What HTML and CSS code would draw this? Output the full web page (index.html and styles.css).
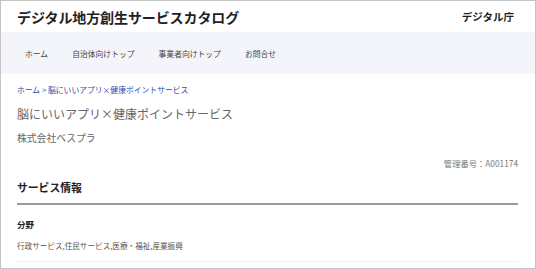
FILE: index.html
```html
<!DOCTYPE html>
<html lang="ja">
<head>
    <meta charset="utf-8">
    <title>デジタル地方創生サービスカタログ</title>
    <link rel="stylesheet" href="styles.css">
</head>
<body>
    <div class="frame">
        <header class="site-header">
            <div class="site-title">デジタル地方創生サービスカタログ</div>
            <div class="agency">デジタル庁</div>
        </header>

        <nav class="global-nav">
            <a href="#">ホーム</a>
            <a href="#">自治体向けトップ</a>
            <a href="#">事業者向けトップ</a>
            <a href="#">お問合せ</a>
        </nav>

        <main class="content">
            <div class="breadcrumb">
                <a href="#">ホーム</a> &gt; <a href="#">脳にいいアプリ×健康ポイントサービス</a>
            </div>
            <h1 class="service-name">脳にいいアプリ×健康ポイントサービス</h1>
            <p class="company">株式会社ベスプラ</p>
            <p class="manage-no">管理番号：A001174</p>

            <h2 class="section-title">サービス情報</h2>
            <dl class="info">
                <dt>分野</dt>
                <dd>行政サービス,住民サービス,医療・福祉,産業振興</dd>
            </dl>
        </main>
    </div>
</body>
</html>
```

FILE: styles.css
```css
body {
    margin: 0;
    padding: 0;
    font-family: "Noto Sans CJK JP", "Noto Sans", sans-serif;
    color: #333;
    background: #fff;
}

a {
    color: inherit;
    text-decoration: none;
}

.frame {
    width: 536px;
    height: 269px;
    box-sizing: border-box;
    border: 1px solid #c4c4c4;
    overflow: hidden;
}

.site-header {
    height: 31px;
    display: flex;
    justify-content: space-between;
    align-items: center;
    padding: 0 21px 0 16px;
}

.site-title {
    font-size: 14px;
    font-weight: 700;
    color: #222;
    letter-spacing: -0.1px;
}

.agency {
    font-size: 10.5px;
    font-weight: 700;
    color: #222;
}

.global-nav {
    height: 42px;
    display: flex;
    align-items: center;
    padding-left: 12px;
    background: #f4f5fb;
}

.global-nav a {
    padding: 0 12px;
    font-size: 7.8px;
    color: #444;
}

.content {
    padding: 0 17px 0 16px;
}

.breadcrumb {
    margin-top: 10px;
    font-size: 7.8px;
    line-height: 12px;
    color: #2b4cb0;
}

.service-name {
    margin: 10px 0 0;
    font-size: 12px;
    line-height: 16px;
    font-weight: 400;
    color: #666;
}

.company {
    margin: 9px 0 0;
    font-size: 9.8px;
    line-height: 14px;
    color: #666;
}

.manage-no {
    margin: 12px 0 0;
    font-size: 8.3px;
    line-height: 12px;
    text-align: right;
    color: #777;
}

.section-title {
    margin: 10px 0 0;
    padding-bottom: 8px;
    font-size: 10.8px;
    line-height: 16px;
    font-weight: 700;
    color: #222;
    border-bottom: 2px solid #9a9a9a;
}

.info {
    margin: 0;
    padding-bottom: 9px;
    border-bottom: 1px solid #eee;
}

.info dt {
    margin-top: 13px;
    font-size: 8.5px;
    line-height: 12px;
    font-weight: 700;
    color: #222;
}

.info dd {
    margin: 10px 0 0;
    font-size: 7.6px;
    line-height: 12px;
    color: #555;
}
```
